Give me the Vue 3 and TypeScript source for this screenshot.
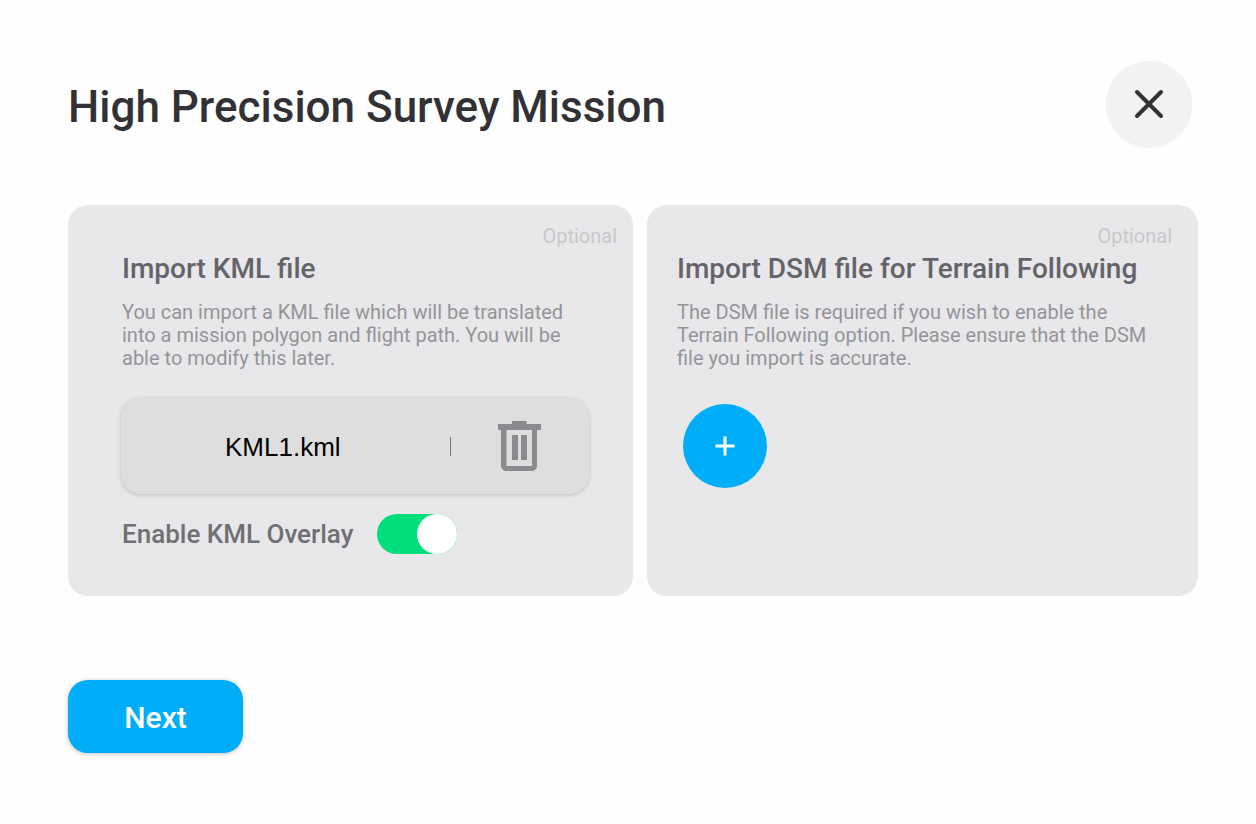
<script setup lang="ts">
import { ref } from 'vue'

const fileName = ref<string>('KML1.kml')
const overlayEnabled = ref<boolean>(true)
</script>

<template>
  <main class="dialog">
    <header class="header">
      <h1 class="title">High Precision Survey Mission</h1>
      <button class="close" type="button" aria-label="Close">
        <svg width="32" height="32" viewBox="0 0 32 32" fill="none" stroke="#323236" stroke-width="4" stroke-linecap="round">
          <path d="M4 4 28 28M28 4 4 28" />
        </svg>
      </button>
    </header>

    <div class="cards">
      <section class="card card-kml">
        <p class="optional">Optional</p>
        <h2 class="card-title">Import KML file</h2>
        <p class="description">
          You can import a KML file which will be translated<br />into a mission polygon and flight path. You will be<br />able to modify this later.
        </p>
        <div class="file">
          <span class="file-name">{{ fileName }}</span>
          <span class="divider"></span>
          <button class="delete" type="button" aria-label="Delete file">
            <svg width="44" height="52" viewBox="0 0 44 52">
              <path fill="#8a8a8f" fill-rule="evenodd" d="M15 1h14.500v3H44v6h-4v36a5 5 0 0 1-5 5H9a5 5 0 0 1-5-5V10H1V4h14zM9.500 10v36H35V10z" />
              <path fill="#8a8a8f" d="M15 15h6v25h-6zM24 15h6v25h-6z" />
            </svg>
          </button>
        </div>
        <div class="overlay-row">
          <label for="overlay">Enable KML Overlay</label>
          <input id="overlay" v-model="overlayEnabled" class="switch" type="checkbox" role="switch" />
        </div>
      </section>

      <section class="card card-dsm">
        <p class="optional">Optional</p>
        <h2 class="card-title">Import DSM file for Terrain Following</h2>
        <p class="description">
          The DSM file is required if you wish to enable the<br />Terrain Following option. Please ensure that the DSM<br />file you import is accurate.
        </p>
        <button class="add" type="button" aria-label="Add DSM file">
          <svg width="20" height="20" viewBox="0 0 20 20" fill="none" stroke="#fff" stroke-width="3">
            <path d="M10 .5v19M.5 10h19" />
          </svg>
        </button>
      </section>
    </div>

    <button class="next" type="button">Next</button>
  </main>
</template>

<style>
body {
  margin: 0;
  background: #fefefe;
}
</style>

<style scoped>
.dialog {
  box-sizing: border-box;
  padding: 61px 58px 61px 68px;
  font-family: Roboto, "Liberation Sans", sans-serif;
}

button {
  padding: 0;
  border: 0;
  font: inherit;
  cursor: pointer;
}

svg {
  display: block;
}

.header {
  display: flex;
  align-items: center;
  justify-content: space-between;
  padding-right: 6px;
}

.title {
  margin: 0;
  padding-top: 5px;
  color: #323236;
  font-size: 44px;
  font-weight: 500;
  line-height: 52px;
}

.close {
  display: grid;
  place-items: center;
  width: 86px;
  height: 86px;
  border-radius: 50%;
  background: #f2f2f2;
  box-shadow: 0 1px 2px rgba(0, 0, 0, 0.05);
}

.cards {
  display: grid;
  grid-template-columns: 565fr 551fr;
  gap: 14px;
  margin-top: 58px;
}

.card {
  box-sizing: border-box;
  min-height: 391px;
  padding-top: 19px;
  padding-bottom: 40px;
  border-radius: 20px;
  background: #e8e8ea;
}

.card-kml {
  padding-left: 54px;
  padding-right: 16px;
}

.card-dsm {
  padding-left: 30px;
  padding-right: 26px;
}

.optional {
  margin: 0;
  color: #c8c8ca;
  font-size: 20px;
  line-height: 24px;
  text-align: right;
}

.card-title {
  margin: 5px 0 0;
  color: #646468;
  font-size: 28px;
  font-weight: 500;
  line-height: 32px;
}

.description {
  margin: 16px 0 0;
  color: #949498;
  font-size: 20px;
  line-height: 23px;
}

.file {
  display: flex;
  align-items: center;
  height: 96px;
  margin: 28px 28px 0 -1px;
  border-radius: 20px;
  background: #dedede;
  box-shadow: 0 1px 4px rgba(0, 0, 0, 0.18);
}

.file-name {
  flex: 1;
  padding-top: 2px;
  padding-left: 104px;
  color: #000;
  font-family: "Liberation Sans", Arial, sans-serif;
  font-size: 26px;
  line-height: 32px;
}

.divider {
  width: 1px;
  height: 19px;
  background: #77777b;
}

.delete {
  margin: 0 48px 0 46px;
  background: none;
}

.overlay-row {
  display: flex;
  align-items: center;
  gap: 24px;
  margin-top: 20px;
  color: #707074;
  font-size: 26px;
  font-weight: 500;
  line-height: 32px;
}

.switch {
  appearance: none;
  width: 80px;
  height: 40px;
  margin: 0;
  border-radius: 20px;
  background: #c4c4c8;
  cursor: pointer;
}

.switch::before {
  content: "";
  display: block;
  width: 40px;
  height: 40px;
  border-radius: 50%;
  background: #fff;
}

.switch:checked {
  background: #00de7c;
}

.switch:checked::before {
  margin-left: auto;
}

.add {
  display: grid;
  place-items: center;
  width: 84px;
  height: 84px;
  margin: 34px 0 0 6px;
  border-radius: 50%;
  background: #00adf9;
}

.next {
  display: block;
  width: 175px;
  height: 73px;
  margin-top: 84px;
  padding-top: 2px;
  border-radius: 20px;
  background: #00adf9;
  box-shadow: 0 1px 4px rgba(0, 0, 0, 0.25);
  color: #fff;
  font-size: 30px;
  font-weight: 500;
  line-height: 36px;
}
</style>
